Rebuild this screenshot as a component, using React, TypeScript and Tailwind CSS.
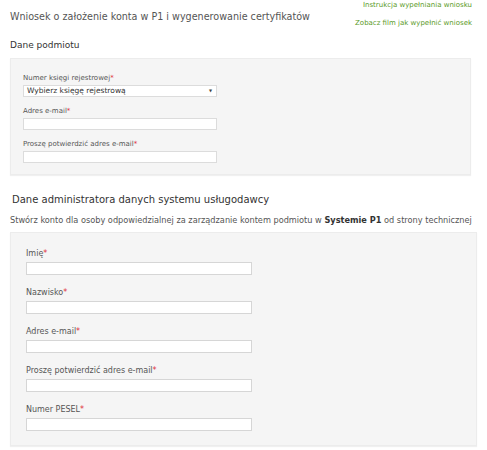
import React from 'react';

const Req = () => <span className="text-[#e0303a]">*</span>;

const SmallField: React.FC<{ label: string; select?: boolean }> = ({ label, select }) => (
  <div className="flex flex-col">
    <label className="text-[7px] leading-[10px] text-[#555]">
      {label}
      <Req />
    </label>
    {select ? (
      <div className="mt-[2px] w-[194px] h-[12px] bg-white border border-[#dcdcdc] flex items-center justify-between pl-[3px] pr-[4px]">
        <span className="text-[7.5px] leading-none text-[#333]">Wybierz księgę rejestrową</span>
        <span className="text-[4px] leading-none text-[#444]">▼</span>
      </div>
    ) : (
      <div className="mt-[2px] w-[194px] h-[12px] bg-white border border-[#dcdcdc]" />
    )}
  </div>
);

const Field: React.FC<{ label: string }> = ({ label }) => (
  <div className="flex flex-col">
    <label className="text-[8px] leading-[11px] text-[#555]">
      {label}
      <Req />
    </label>
    <div className="mt-[3px] w-[226px] h-[13px] bg-white border border-[#d6d6d6]" />
  </div>
);

const App: React.FC = () => {
  return (
    <div className="w-[487px] h-[450px] bg-white overflow-hidden font-['DejaVu_Sans',sans-serif]">
      <div className="flex justify-between pl-[10px] pr-[15px]">
        <h1 className="mt-[11px] text-[9.6px] leading-[12px] text-[#555] font-normal">
          Wniosek o założenie konta w P1 i wygenerowanie certyfikatów
        </h1>
        <div className="flex flex-col items-end pt-[1px] text-[7px] leading-[9px] text-[#5b9a28]">
          <a>Instrukcja wypełniania wniosku</a>
          <a className="mt-[9px]">Zobacz film jak wypełnić wniosek</a>
        </div>
      </div>

      <h2 className="ml-[10px] mt-[12px] text-[9px] leading-[11px] text-[#333] font-normal">Dane podmiotu</h2>

      <div className="ml-[10px] mt-[7px] w-[461px] h-[117px] bg-[#f5f5f5] border border-[#ececec] shadow-[0_1px_1px_rgba(0,0,0,0.06)] pl-[12px] pt-[14px] flex flex-col gap-[9px]">
        <SmallField label="Numer księgi rejestrowej" select />
        <SmallField label="Adres e-mail" />
        <SmallField label="Proszę potwierdzić adres e-mail" />
      </div>

      <h2 className="ml-[12px] mt-[18px] text-[10px] leading-[14px] text-[#333] font-normal">
        Dane administratora danych systemu usługodawcy
      </h2>
      <p className="ml-[10px] mt-[8px] text-[8.2px] leading-[11px] text-[#555] whitespace-nowrap">
        Stwórz konto dla osoby odpowiedzialnej za zarządzanie kontem podmiotu w{' '}
        <b className="text-[#333]">Systemie P1</b> od strony technicznej
      </p>

      <div className="ml-[10px] mt-[6px] w-[467px] h-[214px] bg-[#f5f5f5] border border-[#ececec] shadow-[0_1px_1px_rgba(0,0,0,0.06)] pl-[15px] pt-[15px] flex flex-col gap-[12px]">
        <Field label="Imię" />
        <Field label="Nazwisko" />
        <Field label="Adres e-mail" />
        <Field label="Proszę potwierdzić adres e-mail" />
        <Field label="Numer PESEL" />
      </div>
    </div>
  );
};

export default App;
